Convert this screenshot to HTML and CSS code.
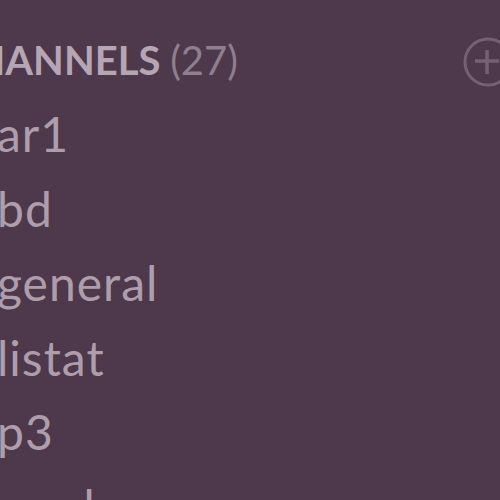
FILE: index.html
```html
<!DOCTYPE html>
<html>
<head>
<meta charset="utf-8">
<link rel="stylesheet" href="styles.css">
</head>
<body>
<div class="sidebar">
  <div class="header">
    <span class="title">CHANNELS <span class="count">(27)</span></span>
    <span class="add">
      <svg width="52" height="52" viewBox="0 0 52 52">
        <circle cx="26" cy="26" r="23" fill="none" stroke="#746072" stroke-width="3"/>
        <path d="M25 14v24M13 25h24" stroke="#746072" stroke-width="3.5"/>
      </svg>
    </span>
  </div>
  <ul class="channels">
    <li>ar1</li>
    <li>bd</li>
    <li>general</li>
    <li>listat</li>
    <li>p3</li>
    <li>random</li>
  </ul>
</div>
</body>
</html>
```
FILE: styles.css
```css
html, body {
  margin: 0;
  padding: 0;
  background: #4d394b;
  overflow: hidden;
}
.sidebar {
  width: 568px;
  margin-left: -54px;
  font-family: Lato, "Noto Sans", sans-serif;
}
.header {
  display: flex;
  align-items: center;
  justify-content: space-between;
  height: 60px;
  margin-top: 30px;
  padding-left: 2px;
}
.title {
  font-weight: 700;
  font-size: 40px;
  color: #b6a6b4;
  line-height: 60px;
}
.count {
  font-weight: 400;
  color: #8f7e8d;
}
.add {
  display: flex;
  margin-top: 4px;
}
.channels {
  list-style: none;
  margin: 7px 0 0;
  padding: 0 0 0 51px;
}
.channels li {
  font-size: 48px;
  letter-spacing: 1px;
  line-height: 74.6px;
  height: 74.6px;
  color: #ae9eac;
}
```
